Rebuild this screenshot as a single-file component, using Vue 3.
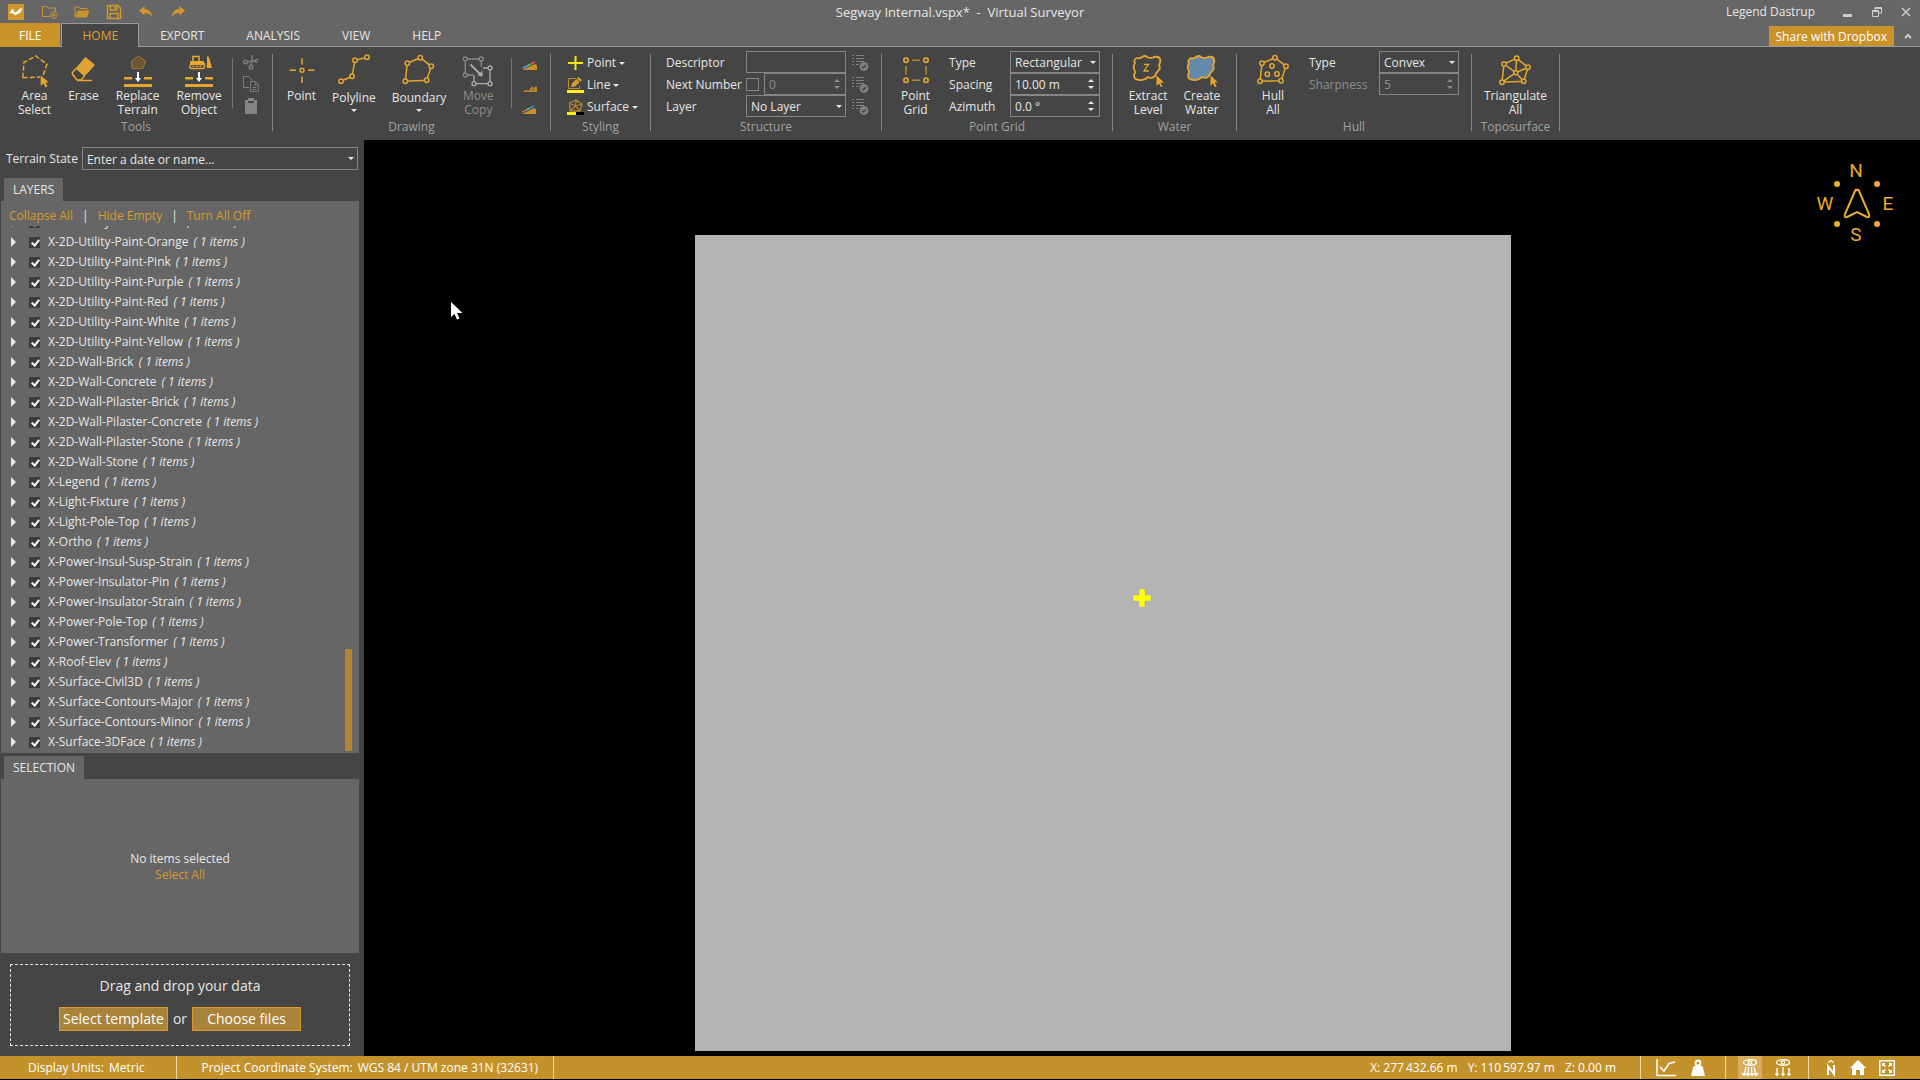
<template>
  <div class="app">
    <header class="titlebar">
      <div class="quick">
        <svg width="16" height="16" viewBox="0 0 16 16">
          <rect width="16" height="16" fill="#d0972c" />
          <path d="M2 8.500L4.500 5L6.500 9L9 8L11 5.500L14 4.500L12 8.500L9 10L7 11L5 9Z" fill="#fff" stroke="#fff" stroke-width=".8" />
        </svg>
        <button class="icon-btn" aria-label="New project">
          <svg width="16" height="14" viewBox="0 0 16 14" fill="none" stroke="#c8932f">
            <path d="M8 11.500H.5V1.500H5L6 3H13.500V7" />
            <circle cx="12" cy="10" r="3.300" />
            <path d="M12 8V12M10 10H14" />
          </svg>
        </button>
        <button class="icon-btn" aria-label="Open project">
          <svg width="16" height="14" viewBox="0 0 16 14" fill="none" stroke="#c8932f">
            <path d="M1 11V2H5L6 3.500H13V5.500" />
            <path d="M1 12L4 6H15L12.500 12Z" fill="#c8932f" />
          </svg>
        </button>
        <button class="icon-btn" aria-label="Save project">
          <svg width="16" height="16" viewBox="0 0 16 16" fill="none" stroke="#d0972c" stroke-width="1.500">
            <path d="M1.500 1.500H12L14.500 4V14.500H1.500Z" />
            <path d="M4.500 2V6H11V2M9 2V5M4 14V9.500H12V14" />
          </svg>
        </button>
        <button class="icon-btn" aria-label="Undo">
          <svg width="16" height="14" viewBox="0 0 16 14">
            <path d="M1 5.500L6.500 1V4C11 4 14 7 14 12C12 9 10 8 6.500 8V10.500Z" fill="#d0972c" />
          </svg>
        </button>
        <button class="icon-btn" aria-label="Redo">
          <svg width="16" height="14" viewBox="0 0 16 14">
            <path d="M15 5.500L9.500 1V4C5 4 2 7 2 12C4 9 6 8 9.500 8V10.500Z" fill="#d0972c" />
          </svg>
        </button>
      </div>
      <h1 class="title">Segway Internal.vspx*&nbsp; -&nbsp; Virtual Surveyor</h1>
      <div class="window-controls">
        <span class="user">Legend Dastrup</span>
        <button class="icon-btn" aria-label="Minimize">
          <svg width="12" height="12" viewBox="0 0 12 12"><rect x="1" y="8" width="9" height="3" fill="#ccc" /></svg>
        </button>
        <button class="icon-btn" aria-label="Restore">
          <svg width="12" height="12" viewBox="0 0 12 12" fill="none" stroke="#ccc">
            <path d="M4 4V1.500H10.500V7H8M4 2.500H10" />
            <path d="M1.500 4.500H7.500V10.500H1.500ZM1.500 5.500H7.500" />
          </svg>
        </button>
        <button class="icon-btn" aria-label="Close">
          <svg width="12" height="12" viewBox="0 0 12 12" stroke="#ccc" stroke-width="1.500"><path d="M2 2L10 10M10 2L2 10" /></svg>
        </button>
      </div>
    </header>

    <nav class="tabs">
      <button class="tab file">FILE</button>
      <button v-for="tab in tabs" :key="tab" class="tab" :class="{ active: tab === activeTab }" @click="activeTab = tab">
        {{ tab }}
      </button>
      <div class="tabs-end">
        <button class="share">Share with Dropbox</button>
        <button class="icon-btn" aria-label="Collapse ribbon">
          <svg width="8" height="8" viewBox="0 0 8 8" fill="none" stroke="#ccc" stroke-width="2"><path d="M1 6L4 3L7 6" /></svg>
        </button>
      </div>
    </nav>

    <div class="ribbon">
      <section class="group tools">
        <div class="group-body">
          <button class="tool">
            <svg width="30" height="34" viewBox="0 0 30 34">
              <path d="M2.700 23.700L4 8.300L15.700 2L27 10.300L23.300 21M2.700 23.700L20 23" fill="none" stroke="#e5a62e" stroke-width="1.500" stroke-dasharray="5 2" />
              <path d="M20.700 21.500V32L23.400 29.600L25.500 33.500L27.600 32.400L25.600 28.700L28.800 28.200Z" fill="#e5a62e" />
            </svg>
            <span>Area<br>Select</span>
          </button>
          <button class="tool">
            <svg width="26" height="34" viewBox="0 0 26 34">
              <path d="M15.500 3.500L24.500 11L14.500 22L6 14.500Z" fill="#e0a336" stroke="#e0a336" />
              <path d="M6 14.500L2.500 18.500Q1.800 19.300 2.500 20.200L6 25Q7 26 8 26L11 26L14.500 22M7 26.500H22" fill="none" stroke="#e5a62e" stroke-width="1.500" />
            </svg>
            <span>Erase</span>
          </button>
          <button class="tool">
            <svg width="28" height="34" viewBox="0 0 28 34">
              <path d="M7.700 7L14.300 2.300L21.700 7L19 14.300L8.300 14.700Z" fill="#6a5535" stroke="#a87b2c" />
              <path d="M0 23H8V25.500H0ZM20 23H28V25.500H20ZM0 30H28V33H0Z" fill="#e5a62e" />
              <path d="M13 18H15V24H17L14 28L11 24H13Z" fill="#fff" />
            </svg>
            <span>Replace<br>Terrain</span>
          </button>
          <button class="tool">
            <svg width="28" height="34" viewBox="0 0 28 34">
              <path d="M7 2.500H14V7M8 2.500V7" fill="none" stroke="#e5a62e" stroke-width="1.500" />
              <path d="M5 7H19V10H5ZM22 2L24 3L27 14H22Z" fill="#e5a62e" />
              <rect x="4.700" y="10.500" width="15" height="4" rx="2" fill="none" stroke="#e5a62e" stroke-width="1.300" />
              <path d="M7.500 12.500H17M19 9L22 12" stroke="#e5a62e" stroke-dasharray="2 1.500" />
              <path d="M0 23H8V25.500H0ZM20 23H28V25.500H20ZM0 30H28V33H0Z" fill="#e5a62e" />
              <path d="M13 18H15V24H17L14 28L11 24H13Z" fill="#fff" />
            </svg>
            <span>Remove<br>Object</span>
          </button>
          <div class="mini-column">
            <button class="icon-btn" aria-label="Cut">
              <svg width="16" height="16" viewBox="0 0 16 16" fill="none" stroke="#7c7c7c" stroke-width="1.500">
                <circle cx="2.500" cy="8" r="1.800" />
                <circle cx="8" cy="13" r="1.800" />
                <path d="M4.500 8L15.500 5.500M8 11L9.500 1M8.500 6.500L14.500 8.500" />
              </svg>
            </button>
            <button class="icon-btn" aria-label="Copy">
              <svg width="16" height="16" viewBox="0 0 16 16" fill="none" stroke="#7c7c7c">
                <path d="M6 11.500H.5V.5H6L8.500 3V4.500" />
                <path d="M7.500 5.500H12.500L15.500 8.500V15.500H7.500ZM12 5.500V9H15M9.500 11.500H13.500M9.500 13.500H13.500" />
              </svg>
            </button>
            <button class="icon-btn" aria-label="Paste">
              <svg width="16" height="16" viewBox="0 0 16 16"><path d="M2 2H5V0H11V2H14V16H2ZM5 3V5H11V3Z" fill="#858585" fill-rule="evenodd" /></svg>
            </button>
          </div>
        </div>
        <h2>Tools</h2>
      </section>

      <section class="group drawing">
        <div class="group-body">
          <button class="tool">
            <svg width="26" height="34" viewBox="0 0 26 34" fill="none" stroke="#e5a62e" stroke-width="1.500">
              <circle cx="13" cy="16.300" r="2" />
              <path d="M13 4V10.500M13 22.500V29M.5 16.300H7M19 16.300H25.500" />
            </svg>
            <span>Point</span>
          </button>
          <button class="tool">
            <svg width="34" height="36" viewBox="0 0 34 36" fill="#454545" stroke="#e5a62e" stroke-width="1.500">
              <path d="M4 27.300L15 22.300L18 6.300L30 3.300" fill="none" />
              <circle cx="4" cy="27.300" r="2.200" />
              <circle cx="15" cy="22.300" r="2.200" />
              <circle cx="18" cy="6.300" r="2.200" />
              <circle cx="30" cy="3.300" r="2.200" />
            </svg>
            <span>Polyline</span>
            <i class="caret"></i>
          </button>
          <button class="tool">
            <svg width="34" height="36" viewBox="0 0 34 36" fill="#454545" stroke="#e5a62e" stroke-width="1.500">
              <path d="M3.300 27.300L24.700 26.300L29.300 12.300L18.300 3.700L5.300 9.300Z" />
              <circle cx="3.300" cy="27.300" r="2.200" />
              <circle cx="24.700" cy="26.300" r="2.200" />
              <circle cx="29.300" cy="12.300" r="2.200" />
              <circle cx="18.300" cy="3.700" r="2.200" />
              <circle cx="5.300" cy="9.300" r="2.200" />
            </svg>
            <span>Boundary</span>
            <i class="caret"></i>
          </button>
          <button class="tool" disabled>
            <svg width="32" height="34" viewBox="0 0 32 34" fill="#454545" stroke="#8a8a8a" stroke-width="1.300">
              <path d="M19.300 13V5H3.300V21H11" fill="none" />
              <path d="M12 21V29.700H28V14H21" fill="none" stroke="#ababab" />
              <circle cx="3.300" cy="5" r="2" />
              <circle cx="19.300" cy="5" r="2" />
              <circle cx="3.300" cy="21" r="2" />
              <g stroke="#ababab">
                <circle cx="12" cy="29.700" r="2" />
                <circle cx="28" cy="29.700" r="2" />
                <circle cx="28" cy="14" r="2" />
                <path d="M8.500 10.500L19 21" stroke-width="1.800" />
              </g>
              <path d="M15.500 21.500L20.500 16.500V22.500Z" fill="#ababab" stroke="none" />
            </svg>
            <span>Move<br>Copy</span>
          </button>
          <div class="mini-column">
            <button class="icon-btn" aria-label="Drape on surface">
              <svg width="16" height="16" viewBox="0 -3 16 16">
                <path d="M0 13L13 7L15 8V13Z" fill="#c98f2b" />
                <path d="M1 11L5 9" stroke="#5aa0e0" stroke-width="1.500" />
                <path d="M5 9L9 7" stroke="#5cc46a" stroke-width="1.500" />
                <path d="M9 7L13 5" stroke="#e45a48" stroke-width="1.500" />
              </svg>
            </button>
            <button class="icon-btn" aria-label="Follow terrain">
              <svg width="16" height="16" viewBox="0 -3 16 16">
                <path d="M0 13L5 10.500L7 11L10 7.500L12 9L14 7L15 8V13Z" fill="#b98530" />
                <path d="M5 12L8 10M10 12L12 9.500" stroke="#5f4d2e" />
              </svg>
            </button>
            <button class="icon-btn" aria-label="Fit to slope">
              <svg width="16" height="16" viewBox="0 -3 16 16">
                <path d="M0 13L12 7L14 8V13Z" fill="#c98f2b" />
                <path d="M0 11L4 9" stroke="#e45a48" stroke-width="1.500" />
                <path d="M4 9L8 7" stroke="#5cc46a" stroke-width="1.500" />
                <path d="M8 7L12 5" stroke="#4d7fd0" stroke-width="1.500" />
              </svg>
            </button>
          </div>
        </div>
        <h2>Drawing</h2>
      </section>

      <section class="group styling">
        <div class="group-body">
          <div class="style-list">
            <button class="style-btn">
              <svg width="17" height="16" viewBox="0 0 17 16"><path d="M8.500 1V15M1 8H16" stroke="#f5e90c" stroke-width="2" /></svg>
              <span>Point</span>
              <i class="caret"></i>
            </button>
            <button class="style-btn">
              <svg width="17" height="16" viewBox="0 0 17 16">
                <path d="M9 1.500H1.500V11.500H12.500V9" fill="none" stroke="#c08a2c" />
                <path d="M4 10L5 6.500L11.500 0L15 3L8 9.500Z" fill="#d89c34" />
                <path d="M10 2L13 5" stroke="#454545" />
                <rect y="13" width="17" height="3" fill="#fff200" />
              </svg>
              <span>Line</span>
              <i class="caret"></i>
            </button>
            <button class="style-btn">
              <svg width="17" height="16" viewBox="0 0 17 16">
                <path d="M2.500 4L9 1L15 5L13 12H3ZM8.500 7L2.500 4M8.500 7L9 1M8.500 7L15 5M8.500 7L13 12M8.500 7L3 12" fill="none" stroke="#b08432" stroke-width="1.300" />
                <rect y="13" width="9" height="3" fill="#fff200" />
                <rect x="9" y="13" width="8" height="3" fill="#000" />
              </svg>
              <span>Surface</span>
              <i class="caret"></i>
            </button>
          </div>
        </div>
        <h2>Styling</h2>
      </section>

      <section class="group structure">
        <div class="group-body">
          <div class="fields">
            <label for="descriptor">Descriptor</label>
            <div class="field"><input id="descriptor" type="text"></div>
            <label for="next-number">Next Number</label>
            <div class="with-check">
              <input type="checkbox" class="check outline" aria-label="Use next number">
              <div class="field dim">
                <input id="next-number" type="text" value="0" disabled>
                <span class="spin"><button aria-label="Increase" class="up"></button><button aria-label="Decrease" class="down"></button></span>
              </div>
            </div>
            <label for="layer">Layer</label>
            <div class="field drop"><select id="layer"><option>No Layer</option></select></div>
          </div>
          <div class="mini-column assign">
            <button v-for="n in 3" :key="n" class="icon-btn" aria-label="Assign to selection">
              <svg width="18" height="18" viewBox="0 0 18 18" fill="none" stroke="#808080">
                <path d="M1 1.500H3M5 1.500H13M1 4.500H3M5 4.500H13M1 7.500H3M5 7.500H13M1 10.500H3M5 10.500H8" />
                <circle cx="13" cy="12.500" r="4" fill="#808080" />
                <path d="M11 12.500L12.500 14L15 11" stroke="#454545" stroke-width="1.300" />
              </svg>
            </button>
          </div>
        </div>
        <h2>Structure</h2>
      </section>

      <section class="group point-grid">
        <div class="group-body">
          <button class="tool">
            <svg width="26" height="34" viewBox="0 0 26 34" fill="none" stroke="#e5a62e" stroke-width="1.600">
              <circle cx="3" cy="6.300" r="2.200" />
              <circle cx="23" cy="6.300" r="2.200" />
              <circle cx="3" cy="26.300" r="2.200" />
              <circle cx="23" cy="26.300" r="2.200" />
              <path d="M9 6.300H17M9 26.300H17M3 12V20.500M23 12V20.500" stroke="#b3852f" />
            </svg>
            <span>Point<br>Grid</span>
          </button>
          <div class="fields">
            <label for="grid-type">Type</label>
            <div class="field drop"><select id="grid-type"><option>Rectangular</option></select></div>
            <label for="spacing">Spacing</label>
            <div class="field">
              <input id="spacing" type="text" value="10.00 m">
              <span class="spin"><button aria-label="Increase" class="up"></button><button aria-label="Decrease" class="down"></button></span>
            </div>
            <label for="azimuth">Azimuth</label>
            <div class="field">
              <input id="azimuth" type="text" value="0.0 °">
              <span class="spin"><button aria-label="Increase" class="up"></button><button aria-label="Decrease" class="down"></button></span>
            </div>
          </div>
        </div>
        <h2>Point Grid</h2>
      </section>

      <section class="group water">
        <div class="group-body">
          <button class="tool">
            <svg width="32" height="34" viewBox="0 0 32 34">
              <path :d="blob" fill="none" stroke="#e5a62e" stroke-width="1.800" />
              <path d="M12 10.500H16.500L12 17H16.800" fill="none" stroke="#e5a62e" stroke-width="1.300" />
              <path d="M24.500 21.500V32L27 29.600L29 33.300L30.600 32.400L28.800 28.700L31.800 28.200Z" fill="#e5a62e" />
            </svg>
            <span>Extract<br>Level</span>
          </button>
          <button class="tool">
            <svg width="32" height="34" viewBox="0 0 32 34">
              <path :d="blob" fill="#6489ab" stroke="#e5a62e" stroke-width="1.800" />
              <path d="M24.500 21.500V32L27 29.600L29 33.300L30.600 32.400L28.800 28.700L31.800 28.200Z" fill="#e5a62e" />
            </svg>
            <span>Create<br>Water</span>
          </button>
        </div>
        <h2>Water</h2>
      </section>

      <section class="group hull">
        <div class="group-body">
          <button class="tool">
            <svg width="32" height="34" viewBox="0 0 32 34" fill="#454545" stroke="#e5a62e" stroke-width="1.500">
              <path d="M5 9.300L18 3.700L29 12.300L24 26.700L3 27.300Z" />
              <circle cx="5" cy="9.300" r="2.200" />
              <circle cx="18" cy="3.700" r="2.200" />
              <circle cx="29" cy="12.300" r="2.200" />
              <circle cx="24" cy="26.700" r="2.200" />
              <circle cx="3" cy="27.300" r="2.200" />
              <circle cx="15" cy="12" r="2.200" />
              <circle cx="10.300" cy="20.300" r="2.200" />
              <circle cx="20" cy="20" r="2.200" />
            </svg>
            <span>Hull<br>All</span>
          </button>
          <div class="fields">
            <label for="hull-type">Type</label>
            <div class="field drop"><select id="hull-type"><option>Convex</option></select></div>
            <label for="sharpness" class="dim">Sharpness</label>
            <div class="field dim">
              <input id="sharpness" type="text" value="5" disabled>
              <span class="spin"><button aria-label="Increase" class="up"></button><button aria-label="Decrease" class="down"></button></span>
            </div>
          </div>
        </div>
        <h2>Hull</h2>
      </section>

      <section class="group toposurface">
        <div class="group-body">
          <button class="tool">
            <svg width="32" height="34" viewBox="0 0 32 34" fill="#454545" stroke="#e5a62e" stroke-width="1.500">
              <path d="M5 10L17.700 4.300L29 13.300L24.700 27.300L3 28.300ZM16.700 18.700L5 10M16.700 18.700L17.700 4.300M16.700 18.700L29 13.300M16.700 18.700L24.700 27.300M16.700 18.700L3 28.300" />
              <circle cx="5" cy="10" r="2.200" />
              <circle cx="17.700" cy="4.300" r="2.200" />
              <circle cx="29" cy="13.300" r="2.200" />
              <circle cx="24.700" cy="27.300" r="2.200" />
              <circle cx="3" cy="28.300" r="2.200" />
              <circle cx="16.700" cy="18.700" r="2" />
            </svg>
            <span>Triangulate<br>All</span>
          </button>
        </div>
        <h2>Toposurface</h2>
      </section>
    </div>

    <div class="main">
      <aside class="sidebar">
        <div class="terrain">
          <label for="terrain">Terrain State</label>
          <div class="field drop"><input id="terrain" type="text" placeholder="Enter a date or name..."></div>
        </div>

        <h3 class="panel-tab">LAYERS</h3>
        <section class="panel layers">
          <div class="layer-links">
            <a href="#">Collapse All</a><span>|</span><a href="#">Hide Empty</a><span>|</span><a href="#">Turn All Off</a>
          </div>
          <div class="layer-scroll">
            <ul>
              <li v-for="layer in layers" :key="layer">
                <i class="expander"></i>
                <label><input type="checkbox" class="check" checked>{{ layer }}</label>
                <em>( 1 items )</em>
              </li>
            </ul>
            <div class="scroll-thumb"></div>
          </div>
        </section>

        <h3 class="panel-tab">SELECTION</h3>
        <section class="panel selection">
          <p>No items selected</p>
          <a href="#">Select All</a>
        </section>

        <section class="dropzone">
          <p>Drag and drop your data</p>
          <div class="drop-actions">
            <button>Select template</button>
            <span>or</span>
            <button>Choose files</button>
          </div>
        </section>
      </aside>

      <main class="viewport">
        <div class="terrain-plane"></div>
        <svg class="marker" width="20" height="20" viewBox="0 0 20 20"><path d="M7 1H13V7H19V13H13V19H7V13H1V7H7Z" fill="#ff0" stroke="#a9a9c4" stroke-width=".5" /></svg>
        <svg class="cursor" width="12" height="19" viewBox="0 0 12 19"><path d="M0 0V15L3.500 12L6 17.500L8.500 16.500L6 11H11.500Z" fill="#fff" /></svg>
        <div class="compass">
          <span class="n">N</span>
          <span class="w">W</span>
          <svg width="46" height="46" viewBox="0 0 46 46">
            <path d="M23 9Q24 8 25 10L35 33Q36 37 33 36L23 31L13 36Q10 37 11 33L21 10Q22 8 23 9Z" fill="none" stroke="#e9ab30" stroke-width="2" />
            <circle cx="3" cy="3" r="3" fill="#e9ab30" />
            <circle cx="43" cy="3" r="3" fill="#e9ab30" />
            <circle cx="3" cy="43" r="3" fill="#e9ab30" />
            <circle cx="43" cy="43" r="3" fill="#e9ab30" />
          </svg>
          <span class="e">E</span>
          <span class="s">S</span>
        </div>
      </main>
    </div>

    <footer class="status">
      <div class="cell units"><span>Display Units:</span><span>Metric</span></div>
      <div class="cell crs"><span>Project Coordinate System:</span><span>WGS 84 / UTM zone 31N (32631)</span></div>
      <div class="coords"><span>X: 277&#8201;432.66 m</span><span>Y: 110&#8201;597.97 m</span><span>Z: 0.00 m</span></div>
      <div class="status-icons">
        <button class="icon-btn" aria-label="Elevation profile">
          <svg width="20" height="18" viewBox="0 0 20 18" fill="none" stroke="#fff" stroke-width="1.500"><path d="M1 0V16.500H20M4 8L8 12L13 4.500L19 3" /></svg>
        </button>
        <button class="icon-btn" aria-label="Weight">
          <svg width="16" height="18" viewBox="0 0 16 18"><path d="M3.500 7H12.500L15 17H1Z" fill="#fff" /><circle cx="8" cy="4" r="2.500" fill="none" stroke="#fff" stroke-width="1.800" /></svg>
        </button>
      </div>
      <div class="status-icons views">
        <button class="icon-btn on" aria-label="Perspective view">
          <svg width="18" height="18" viewBox="0 0 18 18" fill="none" stroke="#fff" stroke-width="1.300">
            <ellipse cx="9" cy="3.500" rx="6.500" ry="2.800" />
            <circle cx="9" cy="3.500" r="1.700" />
            <path d="M5 8L3 16M7.500 8L7 16M10.500 8L11 16M13 8L15 16M1 14L3 16.500L5 14.500M5.500 14.500L7 16.500L8.500 14.500M9.500 14.500L11 16.500L12.500 14.500M13 14.500L15 16.500L17 14" />
          </svg>
        </button>
        <button class="icon-btn" aria-label="Orthographic view">
          <svg width="18" height="18" viewBox="0 0 18 18" fill="none" stroke="#fff" stroke-width="1.300">
            <ellipse cx="9" cy="3.500" rx="6.500" ry="2.800" />
            <circle cx="9" cy="3.500" r="1.700" />
            <path d="M3 9V16M9 8V16M15 9V16M1.500 14.500L3 16.500L4.500 14.500M7.500 14.500L9 16.500L10.500 14.500M13.500 14.500L15 16.500L16.500 14.500" />
          </svg>
        </button>
      </div>
      <div class="status-icons nav">
        <button class="icon-btn" aria-label="North up">
          <svg width="12" height="18" viewBox="0 0 12 18" fill="none" stroke="#fff" stroke-width="2"><path d="M3 16V7L9 15V6" /><path d="M3.500 3.500L6 1.500L8.500 3.500" stroke-width="1.300" /></svg>
        </button>
        <button class="icon-btn" aria-label="Home view">
          <svg width="16" height="18" viewBox="0 0 16 18"><path d="M8 1L16 9H14V16H10V11H6V16H2V9H0Z" fill="#fff" /></svg>
        </button>
        <button class="icon-btn" aria-label="Full extent">
          <svg width="16" height="18" viewBox="0 0 16 18" fill="none" stroke="#fff">
            <rect x=".75" y="1.750" width="14.500" height="14.500" stroke-width="1.500" />
            <path d="M4 5L6.500 7.500M12 5L9.500 7.500M4 13L6.500 10.500M12 13L9.500 10.500" stroke-width="1.600" />
            <path d="M3 4H6.500L3 7.500ZM13 4V7.500L9.500 4ZM3 14V10.500L6.500 14ZM13 14H9.500L13 10.500Z" fill="#fff" stroke="none" />
          </svg>
        </button>
      </div>
    </footer>
  </div>
</template>

<script setup>
import { ref } from 'vue'

const tabs = ['HOME', 'EXPORT', 'ANALYSIS', 'VIEW', 'HELP']
const activeTab = ref('HOME')

// Shared outline for the two water tools
const blob = 'M3 9Q1 6 5 4Q8 5 10 3Q13 1 15 3Q19 5 22 3Q27 2 28 5Q29 8 27 11Q29 15 26 17Q24 19 23 22Q20 25 16 23Q12 27 8 26Q2 26 2 21Q4 18 2 15Q1 12 3 9Z'

const layers = [
  'X-2D-Utility-Paint-Green',
  'X-2D-Utility-Paint-Orange',
  'X-2D-Utility-Paint-Pink',
  'X-2D-Utility-Paint-Purple',
  'X-2D-Utility-Paint-Red',
  'X-2D-Utility-Paint-White',
  'X-2D-Utility-Paint-Yellow',
  'X-2D-Wall-Brick',
  'X-2D-Wall-Concrete',
  'X-2D-Wall-Pilaster-Brick',
  'X-2D-Wall-Pilaster-Concrete',
  'X-2D-Wall-Pilaster-Stone',
  'X-2D-Wall-Stone',
  'X-Legend',
  'X-Light-Fixture',
  'X-Light-Pole-Top',
  'X-Ortho',
  'X-Power-Insul-Susp-Strain',
  'X-Power-Insulator-Pin',
  'X-Power-Insulator-Strain',
  'X-Power-Pole-Top',
  'X-Power-Transformer',
  'X-Roof-Elev',
  'X-Surface-Civil3D',
  'X-Surface-Contours-Major',
  'X-Surface-Contours-Minor',
  'X-Surface-3DFace'
]
</script>

<style>
body {
  background: #000;
}
</style>

<style scoped>
.app {
  display: flex;
  flex-direction: column;
  height: 100vh;
  box-sizing: border-box;
  padding-bottom: 1px;
  background: #000;
  color: #e6e6e6;
  font-family: 'Open Sans', 'Noto Sans', sans-serif;
  font-size: 12px;
  line-height: 14px;
}

.app * {
  box-sizing: border-box;
}

button, input, select {
  font: inherit;
  color: inherit;
  background: none;
  border: 0;
  padding: 0;
  margin: 0;
}

h1, h2, h3, p, ul {
  margin: 0;
  padding: 0;
  font-weight: normal;
  font-size: inherit;
}

svg {
  display: block;
  flex: none;
}

a {
  color: #d79b2c;
  text-decoration: none;
}

.icon-btn {
  display: flex;
  align-items: center;
  justify-content: center;
}

/* title bar */
.titlebar {
  display: grid;
  grid-template-columns: 1fr auto 1fr;
  align-items: center;
  height: 23px;
  flex: none;
  background: #666;
}

.quick {
  display: flex;
  align-items: center;
  gap: 16px;
  padding-left: 8px;
}

.quick svg:first-child + .icon-btn {
  margin-left: 2px;
}

.title {
  font-size: 13px;
  line-height: 22px;
}

.window-controls {
  display: flex;
  justify-content: flex-end;
  align-items: center;
  gap: 17px;
  padding-right: 8px;
}

.user {
  margin-right: 10px;
}

/* tabs */
.tabs {
  display: flex;
  height: 24px;
  flex: none;
  background: #666;
  border-bottom: 1px solid #9a9a9a;
}

.tab {
  padding: 0 20px;
  border: 1px solid transparent;
  border-bottom: 0;
  height: 24px;
}

.tab.file {
  padding: 0 18px;
  margin-right: 1px;
  background: #c99329;
  color: #fff;
}

.tab.active {
  background: #454545;
  border-color: #9a9a9a;
  color: #dba032;
}

.tabs-end {
  display: flex;
  margin-left: auto;
  gap: 10px;
  padding: 3px 8px 0 0;
}

.share {
  height: 20px;
  padding: 1px 7px 0;
  background: #c99329;
  color: #fff;
}

/* ribbon */
.ribbon {
  display: flex;
  height: 93px;
  flex: none;
  padding-top: 7px;
  background: #454545;
}

.group {
  height: 77px;
  flex: none;
  border-right: 1px solid #858585;
}

.group-body {
  display: flex;
  height: 66px;
}

.group h2 {
  text-align: center;
  color: #a0a0a0;
}

.tool {
  display: flex;
  flex-direction: column;
  align-items: center;
  flex: none;
}

.tool + .tool {
  margin-left: 16px;
}

.tools .tool + .tool {
  margin-left: 17px;
}

.tool span {
  margin-top: 1px;
}

.tool:disabled {
  color: #8d8d8d;
}

.tool .caret {
  margin-top: 4px;
}

.caret {
  border: 3px solid transparent;
  border-top-color: #e6e6e6;
  border-bottom: 0;
}

.tools {
  width: 273px;
}

.drawing {
  width: 278px;
}

.tools .group-body,
.drawing .group-body {
  padding: 0 13px 0 18px;
}

.drawing .group-body {
  padding: 0 12px 0 14px;
}

.mini-column {
  display: flex;
  flex-direction: column;
  align-items: flex-end;
  gap: 6px;
  height: 50px;
  margin: 4px 0 0 auto;
  padding-left: 10px;
  border-left: 1px solid #757575;
}

.mini-column .icon-btn {
  position: relative;
  top: -4px;
}

.mini-column.assign {
  gap: 4px;
  margin-left: 5px;
  padding: 0;
  border: 0;
}

.styling {
  width: 100px;
}

.style-list {
  display: grid;
  grid-auto-rows: 22px;
  padding-left: 16px;
  margin-top: -2px;
}

.style-btn {
  display: flex;
  align-items: center;
  gap: 3px;
}

.structure {
  width: 231px;
}

.structure .group-body {
  padding-left: 15px;
}

.fields {
  display: grid;
  grid-template-columns: 80px 100px;
  grid-auto-rows: 22px;
  align-items: center;
  margin-top: -3px;
}

.fields label {
  padding-top: 2px;
}

.field {
  display: flex;
  align-items: center;
  position: relative;
  min-width: 0;
  height: 22px;
  flex: 1;
  border: 1px solid #858585;
}

.field input,
.field select {
  width: 100%;
  height: 100%;
  min-width: 0;
  padding-left: 4px;
  appearance: none;
  outline: 0;
}

.field select {
  padding-top: 2px;
}

.field input::placeholder {
  color: #e6e6e6;
  opacity: 1;
}

.field.drop::after {
  content: '';
  position: absolute;
  right: 3px;
  top: 9px;
  border: 3px solid transparent;
  border-top-color: #e6e6e6;
  border-bottom: 0;
  pointer-events: none;
}

.dim {
  color: #8d8d8d;
}

.spin {
  display: flex;
  flex-direction: column;
  gap: 4px;
  padding-right: 5px;
}

.spin button {
  border: 3px solid transparent;
}

.spin .up {
  border-top: 0;
  border-bottom-color: currentColor;
}

.spin .down {
  border-bottom: 0;
  border-top-color: currentColor;
}

.with-check {
  display: flex;
  align-items: center;
  gap: 5px;
}

.check {
  appearance: none;
  flex: none;
  width: 11px;
  height: 11px;
  background: #3c3c3c;
}

.check:checked::after {
  content: '';
  display: block;
  width: 3px;
  height: 6px;
  margin: 1px 0 0 4px;
  border: solid #fff;
  border-width: 0 2px 2px 0;
  transform: rotate(40deg);
}

.check.outline {
  width: 13px;
  height: 13px;
  background: none;
  border: 1px solid #858585;
}

.point-grid {
  width: 231px;
}

.point-grid .group-body {
  padding-left: 19px;
  gap: 19px;
}

.point-grid .fields {
  grid-template-columns: 61px 90px;
}

.water {
  width: 124px;
}

.water .group-body,
.toposurface .group-body {
  justify-content: center;
}

.hull {
  width: 235px;
}

.hull .group-body {
  padding-left: 20px;
  gap: 20px;
}

.hull .fields {
  grid-template-columns: 70px 80px;
  align-content: start;
}

.toposurface {
  width: 88px;
}

/* main area */
.main {
  display: flex;
  flex: 1;
  min-height: 0;
}

.sidebar {
  display: flex;
  flex-direction: column;
  width: 364px;
  flex: none;
  padding: 7px 5px 10px 1px;
  background: #454545;
}

.terrain {
  display: flex;
  align-items: center;
  gap: 4px;
  margin-bottom: 8px;
  padding: 0 1px 0 5px;
}

.terrain .field {
  height: 23px;
}

.terrain input {
  padding-top: 2px;
}

.panel-tab {
  align-self: flex-start;
  margin-left: 3px;
  padding: 0 9px;
  line-height: 23px;
  background: #666;
}

.panel {
  background: #666;
}

.layers {
  display: flex;
  flex-direction: column;
  flex: 1;
  min-height: 0;
  margin-bottom: 3px;
}

.layer-links {
  display: flex;
  gap: 9px;
  padding: 8px 8px 3px;
}

.layer-scroll {
  display: flex;
  align-items: flex-end;
  flex: 1;
  min-height: 0;
  overflow: hidden;
  padding: 0 7px 1px 8px;
}

.layer-scroll ul {
  flex: 1;
  list-style: none;
}

.layer-scroll li {
  display: flex;
  align-items: center;
  height: 20px;
}

.layer-scroll label {
  display: flex;
  align-items: center;
  gap: 8px;
}

.layer-scroll em {
  margin-left: 5px;
}

.expander {
  margin: 0 13px 0 2px;
  border: 5px solid transparent;
  border-left-color: #e6e6e6;
  border-right: 0;
}

.scroll-thumb {
  width: 7px;
  height: 102px;
  margin-bottom: 1px;
  background: #b3852f;
}

.selection {
  height: 174px;
  flex: none;
  padding-top: 72px;
  text-align: center;
  line-height: 16px;
}

.dropzone {
  flex: none;
  height: 82px;
  margin: 11px 9px 0;
  padding-top: 12px;
  border: 1px dashed #e6e6e6;
  text-align: center;
  font-size: 14px;
  line-height: 18px;
}

.drop-actions {
  display: flex;
  justify-content: center;
  align-items: center;
  gap: 5px;
  margin-top: 12px;
}

.drop-actions button {
  width: 109px;
  height: 24px;
  background: #a98339;
  border: 1px solid #d79b2c;
  white-space: nowrap;
  color: #fff;
}

/* 3D view */
.viewport {
  position: relative;
  display: flex;
  flex: 1;
  min-width: 0;
  padding: 95px 409px 5px 331px;
  background: #000;
}

.terrain-plane {
  flex: 1;
  background: #b3b3b3;
}

.marker {
  position: absolute;
  left: 50%;
  top: 50%;
  transform: translate(-10px, -10px);
}

.cursor {
  position: absolute;
  left: 87px;
  top: 162px;
}

.compass {
  position: absolute;
  top: 21px;
  right: 24px;
  display: grid;
  grid-template: 20px 46px 16px / 18px 46px 16px;
  place-items: center;
  color: #e9ab30;
  font-family: Roboto, sans-serif;
  font-size: 19px;
}

.compass .n,
.compass .s {
  grid-column: 1 / -1;
}

/* status bar */
.status {
  display: flex;
  align-items: stretch;
  height: 23px;
  flex: none;
  background: #c4922b;
  color: #fff;
  line-height: 23px;
}

.cell {
  display: flex;
  gap: 5px;
  border-right: 1px solid #eed9a8;
}

.units {
  padding: 0 32px 0 28px;
}

.crs {
  padding: 0 15px 0 24px;
}

.coords {
  display: flex;
  gap: 10px;
  margin-left: auto;
  padding-right: 24px;
}

.status-icons {
  display: flex;
  align-items: center;
  gap: 14px;
  width: 85px;
  padding-left: 15px;
  border-left: 1px solid #eed9a8;
}

.status-icons.views {
  gap: 12px;
  width: 83px;
  padding-left: 12px;
}

.status-icons.nav {
  gap: 13px;
  width: 112px;
  padding-left: 16px;
}

.on {
  height: 23px;
  padding: 0 3px;
  background: #d6ae5c;
}
</style>
